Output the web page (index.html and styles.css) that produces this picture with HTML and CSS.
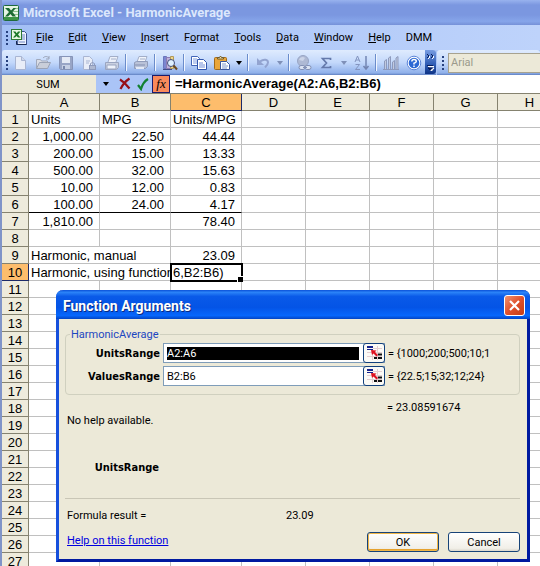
FILE: index.html
```html
<!DOCTYPE html>
<html lang="en">
<head>
<meta charset="utf-8">
<title>Microsoft Excel - HarmonicAverage</title>
<link rel="stylesheet" href="styles.css">
</head>
<body>
<main class="app">
  <header class="titlebar">
    <svg width="16" height="16" viewBox="0 0 16 16" aria-hidden="true">
      <rect x="0.5" y="0.5" width="15" height="15" rx="1" fill="#e6f5e2" stroke="#1f6a3c"/>
      <rect x="1" y="12" width="14" height="3" fill="#3c9444"/>
      <path d="M10 3.500h5M10 6.500h5M10 9.500h5" stroke="#8cc48c"/>
      <path d="M2 3h4l2 2.500L10.500 3H13L9.500 7 13 11.500H9.500L7.500 9 5 11.500H2L6 7z" fill="#1d6b32"/>
    </svg>
    <h1>Microsoft Excel - HarmonicAverage</h1>
  </header>

  <nav class="menubar">
    <span class="grip"></span>
    <svg class="book" width="17" height="17" viewBox="0 0 17 17" aria-hidden="true">
      <path d="M7.500 2.500h6l2 2v11h-9z" fill="#eef3ff" stroke="#3a4f8c"/>
      <path d="M11 6h3M11 8h3M11 10h3M8 13h6" fill="none" stroke="#6f86c4"/>
      <rect x="0.500" y="0.500" width="10" height="10" fill="#e9f8e4" stroke="#2c7a35"/>
      <path d="M2 2.500h2.500l1.200 1.700L7 2.500h2.500L7 5.500l2.500 3H7L5.500 7 4 8.500H2l2.500-3z" fill="#1d7a2a"/>
      <path d="M5.500 12v3.500h10" fill="none" stroke="#17264f"/>
    </svg>
    <button type="button"><u>F</u>ile</button>
    <button type="button"><u>E</u>dit</button>
    <button type="button"><u>V</u>iew</button>
    <button type="button"><u>I</u>nsert</button>
    <button type="button">F<u>o</u>rmat</button>
    <button type="button"><u>T</u>ools</button>
    <button type="button"><u>D</u>ata</button>
    <button type="button"><u>W</u>indow</button>
    <button type="button"><u>H</u>elp</button>
    <button type="button">DMM</button>
  </nav>

  <div class="toolbars">
    <div class="toolbar">
      <span class="grip"></span>
      <button type="button" aria-label="New"><svg width="16" height="16" viewBox="0 0 16 16"><path d="M3.500 1.500h6l4 4v9h-10z" fill="#e8edf8" stroke="#a9b5d2"/><path d="M9.500 1.500v4h4" fill="#cdd7ec" stroke="#a9b5d2"/></svg></button>
      <button type="button" aria-label="Open"><svg width="16" height="16" viewBox="0 0 16 16"><path d="M1.500 13.500v-9h4l1 1.500h6v2" fill="#d9dde6" stroke="#a1a9bb"/><path d="M1.500 13.500l3-6h11l-3 6z" fill="#c9ced9" stroke="#9aa3b6"/><path d="M8 3c2-2 4-2 6 0M14 1v3h-3" fill="none" stroke="#9aa3b6"/></svg></button>
      <button type="button" aria-label="Save"><svg width="16" height="16" viewBox="0 0 16 16"><path d="M1.500 1.500h13v13h-12l-1-1z" fill="#98a5c6" stroke="#8694b8"/><path d="M4 2h8v6H4z" fill="#e4eaf6"/><path d="M4 10h8v4H4z" fill="#c5cfe4"/><path d="M5 11h2v3H5z" fill="#7988ad"/></svg></button>
      <button type="button" aria-label="Permission"><svg width="16" height="16" viewBox="0 0 16 16"><path d="M2.500 1.500h6l3 3v10h-9z" fill="#e8edf8" stroke="#a9b5d2"/><path d="M5 6h4M5 8h3" stroke="#a9b5d2"/><rect x="8.500" y="10.500" width="6" height="4" fill="#aeb8d0" stroke="#8e9abb"/><path d="M9.500 10V8.500q2-2 4 0V10" fill="none" stroke="#8e9abb"/></svg></button>
      <button type="button" aria-label="Quick print"><svg width="16" height="16" viewBox="0 0 16 16"><path d="M4 7l2-5.500h8L12 7M7 4h5" fill="#edf1fa" stroke="#a3aec8"/><path d="M1.500 7.500h13v5l-2 2h-11z" fill="#c9d0e0" stroke="#9aa5c0"/><path d="M3 10h9v4H3z" fill="#eef2fa" stroke="#9aa5c0"/></svg></button>
      <i class="sep"></i>
      <button type="button" aria-label="Print"><svg width="16" height="16" viewBox="0 0 16 16"><path d="M4 7l2-5.500h8L12 7M7 4h5" fill="#f2f5fb" stroke="#a3aec8"/><path d="M1.500 7.500l2-1h11v5l-2 2h-11z" fill="#b9c2d8" stroke="#909cba"/><path d="M2 10h10" stroke="#8491b1"/><path d="M3 12h8v2H3z" fill="#e3e9f5"/></svg></button>
      <i class="sep"></i>
      <button type="button" aria-label="Research"><svg width="16" height="16" viewBox="0 0 16 16"><path d="M1.500 1.500h3v12h-3z" fill="#7b86d1" stroke="#6a75bd"/><path d="M4.500 2.500h4v11h-4z" fill="#c0b2dc" stroke="#8d7cb3"/><path d="M8.500 1.500h3v12h-3z" fill="#f0d68a" stroke="#b0995a"/><path d="M1 14.500h9" stroke="#404b88"/><circle cx="9" cy="8" r="3.500" fill="#dff1ff" stroke="#414e7a"/><path d="M11.500 10.500l3.500 4" stroke="#6b4a20" stroke-width="2"/></svg></button>
      <i class="sep"></i>
      <button type="button" aria-label="Copy"><svg width="16" height="16" viewBox="0 0 16 16"><path d="M.5 1.500h6l2 2v7h-8z" fill="#fff" stroke="#4265b8"/><path d="M2 4h4M2 6h4M2 8h4" stroke="#7f9be0"/><path d="M6.500 4.500h6l3 3v7h-9z" fill="#fff" stroke="#3156ae"/><path d="M8 8h4M8 10h6M8 12h6" stroke="#6f8cd8"/></svg></button>
      <button type="button" aria-label="Paste"><svg width="16" height="16" viewBox="0 0 16 16"><rect x=".5" y="2.500" width="12" height="12" rx="1" fill="#e9a63b" stroke="#a06a1c"/><path d="M3.500 4V2.500h2L6.500 1l1 1.500h2V4z" fill="#f3e3a8" stroke="#6f5a2c"/><path d="M6.500 6.500h6l3 3v5h-9z" fill="#fff" stroke="#3b57a0"/><path d="M8 9h4M8 11h6M8 13h5" stroke="#7f95cc"/></svg></button>
      <button type="button" class="drop live" aria-label="Paste options"></button>
      <i class="sep"></i>
      <button type="button" aria-label="Undo"><svg width="16" height="16" viewBox="0 0 16 16"><path d="M5 6.500c4-3 8-2 8 1 0 2-1 3-3 5" fill="none" stroke="#93a4d0" stroke-width="2"/><path d="M2 3v7h7z" fill="#93a4d0"/></svg></button>
      <button type="button" class="drop" aria-label="Undo options"></button>
      <i class="sep"></i>
      <button type="button" aria-label="Hyperlink"><svg width="16" height="16" viewBox="0 0 16 16"><circle cx="7" cy="6" r="5.500" fill="#aeb9d4" stroke="#98a5c5"/><path d="M4 3q3-2 5 0l-2 3-4-1z" fill="#cbd4e8"/><rect x="3" y="10.500" width="6" height="4" rx="2" fill="#dbe3f3" stroke="#8391b5"/><rect x="9" y="10.500" width="6" height="4" rx="2" fill="#dbe3f3" stroke="#8391b5"/><path d="M7 12.500h4" stroke="#8391b5"/></svg></button>
      <button type="button" aria-label="AutoSum"><svg width="16" height="16" viewBox="0 0 16 16"><path d="M11.500 5V3.500h-8l4 4.500-4 4.500h8V11" fill="none" stroke="#6479ab" stroke-width="1.700"/></svg></button>
      <button type="button" class="drop" aria-label="AutoSum options"></button>
      <button type="button" aria-label="Sort ascending"><svg width="16" height="16" viewBox="0 0 16 16"><path d="M1 7l2.500-6L6 7M2 5h3M1.500 9.500h4l-4 5h4.500" fill="none" stroke="#8394bf"/><path d="M12 1v13M9.500 11l2.500 3 2.500-3" fill="none" stroke="#7385b2" stroke-width="1.500"/></svg></button>
      <i class="sep"></i>
      <button type="button" aria-label="Chart wizard"><svg width="16" height="16" viewBox="0 0 16 16"><path d="M1.500 6l2-1.500v10h-2zM5.500 3L7.500 1.500v13h-2zM9.500 7l2-1.500v9h-2zM13 3l2-1.500v13h-2z" fill="#c1cadf" stroke="#8d9abd"/><path d="M0 14.500h16" stroke="#8d9abd"/></svg></button>
      <button type="button" aria-label="Help"><svg width="16" height="16" viewBox="0 0 16 16"><circle cx="8" cy="8" r="6.800" fill="#fff" stroke="#5b84d8"/><circle cx="8" cy="8" r="5.300" fill="#2d68d4"/><path d="M5.800 6.500Q6 4.500 8 4.500q2.300 0 2.300 1.800Q10.300 7.500 8 8.300V9.500M8 10.500V12" fill="none" stroke="#fff" stroke-width="1.500"/></svg></button>
      <button type="button" class="more" aria-label="Toolbar options"><svg width="11" height="24" viewBox="0 0 11 24"><path d="M3 5l2 2-2 2M7 5l2 2-2 2" fill="none" stroke="#fff"/><path d="M2 4l2 2-2 2M6 4l2 2-2 2" fill="none" stroke="#061d5c"/><path d="M3 16.500h6M4 18h5l-2.500 3z" stroke="#fff" fill="#fff"/><path d="M2 15.500h6M3 18h4.500L5 20z" stroke="#061d5c" fill="#061d5c"/></svg></button>
    </div>
    <div class="toolbar fonts">
      <span class="grip"></span>
      <select aria-label="Font" disabled><option>Arial</option></select>
    </div>
  </div>

  <div class="formula">
    <input class="namebox" aria-label="Name box" value="SUM">
    <button type="button" class="drop live" aria-label="Names"></button>
    <button type="button" aria-label="Cancel entry"><svg width="14" height="14" viewBox="0 0 14 14"><path d="M2 2.500q5 3 9.500 9M11.500 1.500Q6 5 2.500 12" fill="none" stroke="#961018" stroke-width="2.200"/></svg></button>
    <button type="button" aria-label="Enter"><svg width="14" height="14" viewBox="0 0 14 14"><path d="M2 8l3 4Q7 5 12 2" fill="none" stroke="#138032" stroke-width="2.200"/></svg></button>
    <button type="button" class="fx" aria-label="Insert function"><em>fx</em></button>
    <input class="entry" aria-label="Formula" value="=HarmonicAverage(A2:A6,B2:B6)">
  </div>

  <table class="sheet">
    <colgroup><col class="c-row"><col class="c-wide"><col class="c-wide"><col class="c-wide"><col class="c-std"><col class="c-std"><col class="c-std"><col class="c-std"><col class="c-std"></colgroup>
    <thead><tr><th></th><th>A</th><th>B</th><th class="current">C</th><th>D</th><th>E</th><th>F</th><th>G</th><th>H</th></tr></thead>
    <tbody id="rows"></tbody>
  </table>

  <section class="dialog" role="dialog" aria-labelledby="dlg-title">
    <header class="caption">
      <h2 id="dlg-title">Function Arguments</h2>
      <button type="button" class="close" aria-label="Close"><svg width="19" height="19" viewBox="0 0 19 19"><path d="M5 5l9 9M14 5l-9 9" stroke="#fff" stroke-width="2.200"/></svg></button>
    </header>
    <form class="panel">
      <fieldset>
        <legend>HarmonicAverage</legend>
        <div class="arg">
          <label for="units">UnitsRange</label>
          <div class="ref">
            <input id="units" class="selected" value="A2:A6">
            <button type="button" aria-label="Pick units range"><svg width="17" height="16" viewBox="0 0 17 16"><path d="M7 3.500h9M1 7.500h15M1 11.500h15M6.500 4v11M11.500 1v14" stroke="#e3cdd0"/><path d="M1 2h6" stroke="#16228c" stroke-width="2"/><path d="M1 4.500h6" stroke="#16228c"/><path d="M8 13h3M12 13h4M12 9.500h4" stroke="#111" stroke-width="2"/><path d="M5 5l5.500.5L9 7l3 3-1.500 1.500-3-3L6 10z" fill="#df1020"/></svg></button>
          </div>
          <output>= {1000;200;500;10;1</output>
        </div>
        <div class="arg">
          <label for="values">ValuesRange</label>
          <div class="ref">
            <input id="values" value="B2:B6">
            <button type="button" aria-label="Pick values range"><svg width="17" height="16" viewBox="0 0 17 16"><path d="M7 3.500h9M1 7.500h15M1 11.500h15M6.500 4v11M11.500 1v14" stroke="#e3cdd0"/><path d="M1 2h6" stroke="#16228c" stroke-width="2"/><path d="M1 4.500h6" stroke="#16228c"/><path d="M8 13h3M12 13h4M12 9.500h4" stroke="#111" stroke-width="2"/><path d="M5 5l5.500.5L9 7l3 3-1.500 1.500-3-3L6 10z" fill="#df1020"/></svg></button>
          </div>
          <output>= {22.5;15;32;12;24}</output>
        </div>
      </fieldset>
      <div class="arg total"><output>= 23.08591674</output></div>
      <p class="hint">No help available.</p>
      <div class="arg detail"><strong>UnitsRange</strong></div>
      <div class="result"><span>Formula result =</span><output>23.09</output></div>
      <footer>
        <a href="#help">Help on this function</a>
        <button type="submit" class="primary">OK</button>
        <button type="button">Cancel</button>
      </footer>
    </form>
  </section>
</main>
<script src="script.js"></script>
</body>
</html>
```
FILE: styles.css
```css
* { box-sizing: border-box; }

body {
  margin: 0;
  font: 11px/13px Roboto, "DejaVu Sans Condensed", sans-serif;
  color: #000;
}

button, input, select { font: inherit; color: inherit; margin: 0; }
h1, h2, p { margin: 0; }
button { padding: 0; border: 0; background: none; }
svg { display: block; }

.app {
  position: relative;
  height: 100vh;
  overflow: hidden;
  background: #fff;
  border-left: 2px solid #8094c8;
}

/* Window caption and menus */
.titlebar {
  display: flex;
  align-items: center;
  gap: 4px;
  height: 25px;
  padding-left: 1px;
  background: linear-gradient(#98b2ee, #7b97e0 20%, #7b97e0 60%, #86a5ea 85%, #7591d8);
}
.titlebar h1 {
  font: bold 13px/18px Roboto, sans-serif;
  color: #dce7fc;
}

.menubar {
  display: flex;
  align-items: center;
  gap: 15px;
  height: 25px;
  padding-left: 4px;
  background: linear-gradient(90deg, #a3bff5, #bed3fb);
}
.menubar button { height: 20px; }
.book { margin: 0 -7px 0 -12px; }

.grip {
  flex: none;
  width: 2px;
  height: 14px;
  background: repeating-linear-gradient(#27417f 0 2px, transparent 2px 4px);
}

.toolbars { display: flex; height: 25px; background: #a9c4f7; }
.toolbar {
  display: flex;
  align-items: center;
  flex: none;
  padding-left: 4px;
  border-radius: 3px 3px 0 0;
  background: linear-gradient(#dfebfe, #c3d8fb 50%, #8fb0ea 92%, #5f7fc0);
}
.toolbar button {
  display: flex;
  align-items: center;
  justify-content: center;
  width: 23px;
  height: 24px;
}
.toolbar .sep {
  width: 2px;
  height: 17px;
  margin: 0 2px;
  border-left: 1px solid #6a8ccb;
  border-right: 1px solid #f1f6ff;
}
.toolbar .drop { width: 12px; color: #7f90b8; }
.drop::before {
  content: "";
  border: 3px solid transparent;
  border-top: 4px solid currentColor;
  border-bottom: 0;
}
.toolbar .live { color: #000; }
.toolbar .more {
  align-self: stretch;
  width: 11px;
  border-radius: 0 3px 3px 0;
  background: linear-gradient(#789de2, #2f5cb4 60%, #0d3385);
}
.fonts { flex: 1; gap: 4px; padding-left: 5px; margin-left: 1px; }
.fonts select {
  flex: 1;
  height: 20px;
  padding: 0 2px;
  appearance: none;
  border: 1px solid #a7a28f;
  border-right: 0;
  border-radius: 0;
  background: #ece9d8;
  color: #9b9a8c;
  opacity: 1;
}

/* Formula bar */
.formula {
  display: flex;
  align-items: center;
  height: 18px;
  background: #aac4f7;
}
.formula button {
  display: flex;
  align-items: center;
  justify-content: center;
  width: 18px;
  height: 18px;
}
.formula input { height: 18px; border: 0; outline: 0; }
.formula .namebox {
  width: 94px;
  padding: 0 2px 0 0;
  background: #ece9d8;
  text-align: center;
}
.formula .drop { width: 20px; }
.formula .fx {
  border: 1px solid #1b1b6c;
  background: #f98a5c;
  font: 13px/14px "Liberation Serif", serif;
}
.formula .entry {
  flex: 1;
  min-width: 0;
  padding: 0 5px;
  background: #fff;
  font: bold 13px/18px "Liberation Sans", sans-serif;
}

/* Worksheet grid */
.sheet {
  table-layout: fixed;
  width: 560px;
  border-collapse: separate;
  border-spacing: 0;
  border-top: 1px solid #85826f;
  font: 13px/15px "Liberation Sans", sans-serif;
}
.c-row { width: 27px; }
.c-wide { width: 71px; }
.c-std { width: 64px; }
.sheet th, .sheet td {
  height: 17px;
  padding: 1px 6px 0 2px;
  border: 0 solid #c0c0c0;
  border-width: 0 1px 1px 0;
  overflow: hidden;
  white-space: nowrap;
  text-align: left;
}
.sheet th {
  padding: 1px 0 0;
  border-color: #85826f;
  background: #eeebdc;
  font-weight: normal;
  text-align: center;
}
.sheet th.current { background: #fdbd6c; border-color: #1c2a68; }
.sheet td.num { text-align: right; }
.sheet .rule td:nth-child(-n+4) { border-bottom-color: #000; }
.sheet .active {
  position: relative;
  overflow: visible;
  outline: 2px solid #000;
  outline-offset: -1px;
}
.sheet .active::after {
  content: "";
  position: absolute;
  right: -2px;
  bottom: -2px;
  width: 5px;
  height: 5px;
  border: 1px solid #fff;
  border-width: 1px 0 0 1px;
  background: #000;
}

/* Function Arguments window */
.dialog {
  position: absolute;
  top: 290px;
  left: 54px;
  right: 10px;
  border: 3px solid #0a3bd0;
  border-color: #1650dc #001aa0 #001aa0 #1650dc;
  border-top: 0;
  border-radius: 7px 7px 0 0;
  background: #ece9d8;
}
.caption {
  display: flex;
  align-items: center;
  justify-content: space-between;
  height: 29px;
  margin: 0 -3px;
  padding: 2px 5px 0 7px;
  border-radius: 7px 7px 0 0;
  background: linear-gradient(#0a50d8, #2b83f8 8%, #0a5ae8 22%, #0454e6 60%, #0667fc 88%, #0244c4);
}
.caption h2 {
  font: bold 14px/18px Roboto, sans-serif;
  color: #fff;
  text-shadow: 1px 1px #0a2a80;
}
.close {
  border: 1px solid #fff;
  border-radius: 3px;
  background: linear-gradient(135deg, #f0926f, #e0502c 50%, #c43d14);
}

.panel { padding: 9px 7px 7px 6px; }
fieldset {
  min-width: 0;
  margin: 0;
  padding: 2px 0 8px;
  border: 1px solid #d0d0bf;
  border-radius: 4px;
}
legend { margin-left: 4px; padding: 0 1px; color: #1c46c0; }
.arg {
  display: grid;
  grid-template-columns: 94px 222px 1fr;
  column-gap: 3px;
  align-items: center;
}
.arg + .arg { margin-top: 3px; }
.arg label, .arg strong {
  font: bold 11px/13px "DejaVu Sans Condensed", "DejaVu Sans", sans-serif;
  text-align: right;
}
.ref {
  display: flex;
  height: 20px;
  border: 1px solid #7f9db9;
  background: #fff;
}
.ref input {
  flex: 1;
  min-width: 0;
  height: 13px;
  margin: 3px 5px 2px 3px;
  padding: 0;
  border: 0;
  outline: 0;
  background: #fff;
}
.ref .selected { background: #000; color: #fff; }
.ref button {
  display: flex;
  align-items: center;
  justify-content: center;
  width: 22px;
  margin: -1px;
  border: 1px solid #12407c;
  border-radius: 3px;
  background: #fbfaf6;
}
.total { padding-top: 6px; }
.total output { grid-column: 3; }
.hint { padding-left: 2px; }
.detail { padding: 34px 0 24px; }
.result {
  display: grid;
  grid-template-columns: 219px 1fr;
  padding: 10px 2px;
  border-top: 1px solid #c9c6b6;
}
footer { display: flex; gap: 9px; }
footer a { margin-right: auto; padding: 2px 0 0 2px; color: #0000e0; }
footer button {
  width: 72px;
  height: 20px;
  border: 1px solid #174378;
  border-radius: 3px;
  background: linear-gradient(#fff, #f1efe8 85%, #dad6cb);
}
footer .primary { box-shadow: inset 0 0 0 1px #efb648, inset 0 -2px #e6a22e; }
```
FILE: script.js
```js
const cells = {
  1: ["Units", "MPG", "Units/MPG"],
  2: ["1,000.00", "22.50", "44.44"],
  3: ["200.00", "15.00", "13.33"],
  4: ["500.00", "32.00", "15.63"],
  5: ["10.00", "12.00", "0.83"],
  6: ["100.00", "24.00", "4.17"],
  7: ["1,810.00", "", "78.40"],
  9: ["Harmonic, manual", null, "23.09"],
  10: ["Harmonic, using function", null, "6,B2:B6)"]
};
const body = document.getElementById("rows");

for (let r = 1; r <= 27; r++) {
  const row = body.insertRow();
  const head = document.createElement("th");
  head.textContent = r;
  if (r === 10) head.className = "current";
  if (r === 6) row.className = "rule";
  row.append(head);
  const data = cells[r] || [];
  for (let c = 0; c < 8; c++) {
    if (data[c] === null) continue;
    const cell = row.insertCell();
    cell.textContent = data[c] || "";
    if (data[c + 1] === null) cell.colSpan = 2;
    if (/^[\d.,]+$/.test(data[c] || "")) cell.className = "num";
    if (r === 10 && c === 2) cell.className = "active";
  }
}
```
